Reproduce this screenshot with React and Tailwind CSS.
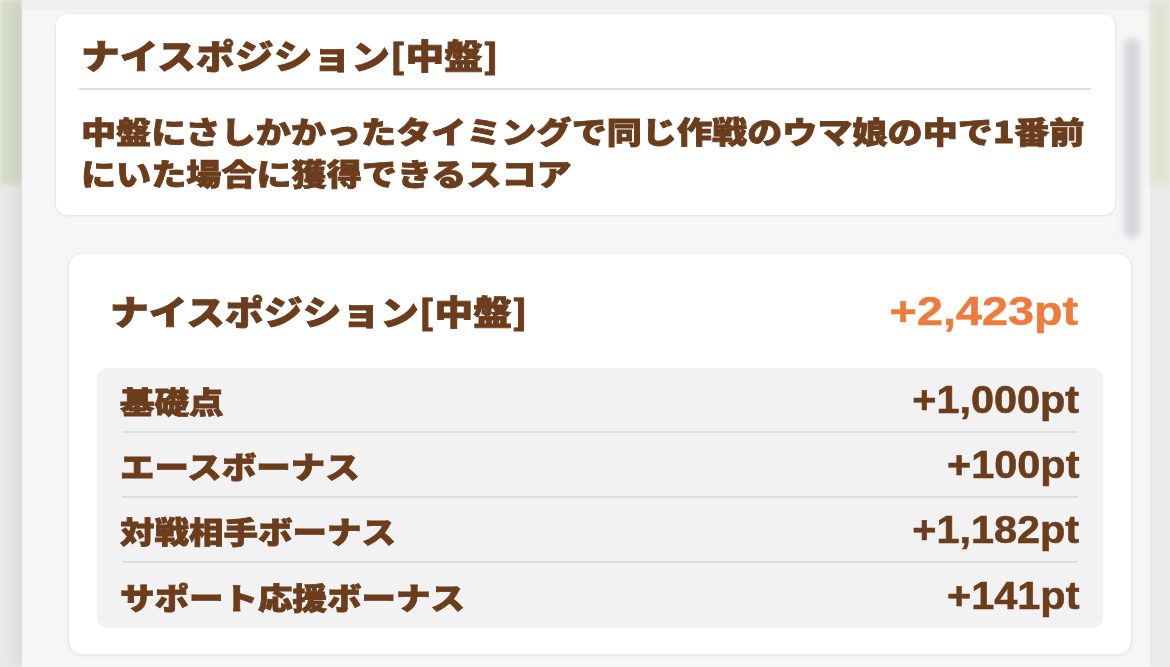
import React from "react";

const JP =
  "font-['Noto_Sans_CJK_JP','Noto_Sans_CJK_SC',sans-serif] font-black text-[#6b3d1c] [-webkit-text-stroke:0.8px_#6b3d1c]";
const NUM = "font-['Liberation_Sans',Arial,sans-serif] font-bold";

const rows = [
  { label: "基礎点", value: "+1,000pt" },
  { label: "エースボーナス", value: "+100pt" },
  { label: "対戦相手ボーナス", value: "+1,182pt" },
  { label: "サポート応援ボーナス", value: "+141pt" },
];

function ScoreRow({ label, value, last }) {
  return (
    <div className="flex h-[65px] flex-col">
      <div className="flex flex-1 items-center justify-between pl-[23px] pr-[24px]">
        <span className={`${JP} text-[30px] leading-none`}>
          <span className="inline-block origin-left scale-x-[1.15] whitespace-nowrap">{label}</span>
        </span>
        <span className={`${NUM} text-[38px] leading-none text-[#6b3d1c] [-webkit-text-stroke:0.6px_#6b3d1c]`}>
          <span className="inline-block origin-right scale-x-[1.09] whitespace-nowrap">{value}</span>
        </span>
      </div>
      {!last && <div className="mx-[25px] h-[2px] bg-[#dddddd]" />}
    </div>
  );
}

export default function App() {
  return (
    <div className="flex h-[667px] w-[1170px] overflow-hidden bg-[#ececec]">
      {/* 左の背景 */}
      <div className="flex w-[22px] shrink-0 flex-col">
        <div className="h-[185px] bg-[#d6ddc8] blur-[2px]" />
        <div className="flex-1 bg-[#e9e9e9]" />
      </div>

      {/* パネル */}
      <div className="relative flex w-[1128px] shrink-0 flex-col bg-[#f6f6f6] shadow-[-8px_0_14px_rgba(0,0,0,0.06)]">
        <div className="h-[10px] bg-[#efefef] blur-[1px]" />

        <div className="ml-[33px] mt-[3px] h-[203px] w-[1061px] rounded-[12px] border border-[#e9e9e9] bg-white px-[23px] shadow-[0_1px_2px_rgba(0,0,0,0.04)]">
          <div className={`${JP} pl-[2px] pt-[21px] text-[34px] leading-[40px]`}>
            <span className="inline-block origin-left scale-x-[1.14] whitespace-nowrap">ナイスポジション[中盤]</span>
          </div>
          <div className="mr-[1px] mt-[13px] h-[2px] bg-[#dcdcdc]" />
          <div className={`${JP} mt-[19px] pl-[2px] text-[30px] leading-[42px]`}>
            <span className="inline-block origin-left scale-x-[1.17] whitespace-nowrap">
              中盤にさしかかったタイミングで同じ作戦のウマ娘の中で1番前
              <br />
              にいた場合に獲得できるスコア
            </span>
          </div>
        </div>

        <div className="ml-[46px] mt-[37px] flex h-[402px] w-[1064px] flex-col rounded-[14px] border border-[#e9e9e9] bg-white shadow-[0_1px_3px_rgba(0,0,0,0.05)]">
          <div className="flex items-center justify-between pl-[41px] pr-[53px] pt-[37px]">
            <span className={`${JP} text-[34px] leading-[40px]`}>
              <span className="inline-block origin-left scale-x-[1.14] whitespace-nowrap">ナイスポジション[中盤]</span>
            </span>
            <span className={`${NUM} text-[40px] leading-[40px] text-[#ee7a3b] [-webkit-text-stroke:0.5px_#ee7a3b]`}>
              <span className="inline-block origin-right scale-x-[1.17] whitespace-nowrap">+2,423pt</span>
            </span>
          </div>
          <div className="mx-[28px] mt-[37px] flex flex-col rounded-[10px] bg-[#f2f2f2]">
            {rows.map((r, i) => (
              <ScoreRow key={r.label} label={r.label} value={r.value} last={i === rows.length - 1} />
            ))}
          </div>
        </div>

        {/* スクロールバー */}
        <div className="absolute right-[10px] top-[38px] h-[200px] w-[16px] rounded-full bg-[#d6d6dc] blur-[3px]" />
      </div>

      {/* 右の背景 */}
      <div className="flex flex-1 flex-col">
        <div className="h-[185px] bg-[#dfe5d3] blur-[3px]" />
        <div className="flex-1 bg-[#ebebeb]" />
      </div>
    </div>
  );
}
